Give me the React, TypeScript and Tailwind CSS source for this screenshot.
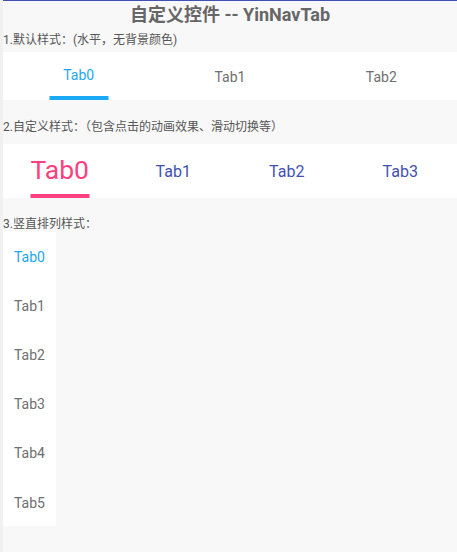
import React from "react";

const font = { fontFamily: 'Roboto, "Noto Sans CJK SC", sans-serif' };

export default function App() {
  const h1 = ["Tab0", "Tab1", "Tab2"];
  const h2 = ["Tab0", "Tab1", "Tab2", "Tab3"];
  const v = ["Tab0", "Tab1", "Tab2", "Tab3", "Tab4", "Tab5"];
  return (
    <div className="flex w-[457px] h-[552px] bg-[#f8f8f8] overflow-hidden" style={font}>
      <div className="w-[3px] shrink-0 bg-[#f1f1f1]" />
      <div className="flex flex-col flex-1 min-w-0">
        <div className="h-[1px] bg-[#3f51b5]" />
        <div className="h-[27px] flex items-center justify-center text-[18px] font-bold text-[#666666] leading-none">
          自定义控件 -- YinNavTab
        </div>
        <div className="h-[24px] flex items-center text-[12px] text-[#555555] leading-none">
          1.默认样式：(水平，无背景颜色)
        </div>
        <div className="h-[48px] bg-white grid grid-cols-3">
          {h1.map((t, i) => (
            <div key={t} className="relative flex items-center justify-center">
              <span className={i === 0 ? "text-[14px] text-[#1ba8f4] -mt-[1px]" : "text-[14px] text-[#707070] pt-[2px]"}>{t}</span>
              {i === 0 && <div className="absolute bottom-0 left-1/2 -translate-x-1/2 w-[59px] h-[4px] bg-[#1ba8f4]" />}
            </div>
          ))}
        </div>
        <div className="h-[44px] flex items-center pt-[10px] text-[12px] text-[#555555] leading-none">
          2.自定义样式：（包含点击的动画效果、滑动切换等）
        </div>
        <div className="h-[54px] bg-white grid grid-cols-4">
          {h2.map((t, i) => (
            <div key={t} className="relative flex items-center justify-center">
              <span className={i === 0 ? "text-[26.5px] leading-none text-[#ff3f7f] -mt-[1px]" : "text-[16px] text-[#3f51b5] pt-[2px]"}>{t}</span>
              {i === 0 && <div className="absolute bottom-0 left-1/2 -translate-x-1/2 w-[59px] h-[4px] bg-[#ff3f7f]" />}
            </div>
          ))}
        </div>
        <div className="h-[33px] flex items-center pt-[18px] text-[12px] text-[#555555] leading-none">
          3.竖直排列样式：
        </div>
        <div className="w-[53px] bg-white flex flex-col">
          {v.map((t, i) => (
            <div key={t} className="h-[49.2px] flex items-center justify-center pt-[3px]">
              <span className={i === 0 ? "text-[14px] text-[#1ba8f4]" : "text-[14px] text-[#707070]"}>{t}</span>
            </div>
          ))}
        </div>
      </div>
    </div>
  );
}
